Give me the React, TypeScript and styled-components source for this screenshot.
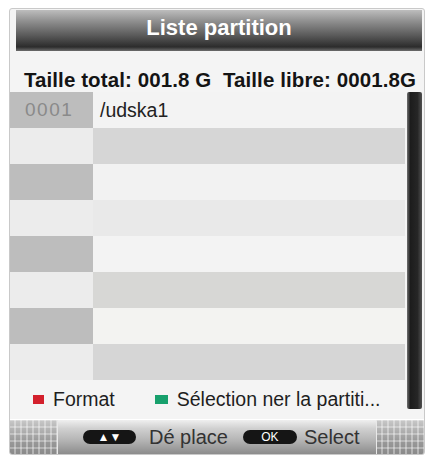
import React from "react";
import styled, { createGlobalStyle } from "styled-components";

const GlobalStyle = createGlobalStyle`
  body {
    margin: 0;
    background: #ffffff;
    font-family: "Liberation Sans", Arial, sans-serif;
  }
`;

const Panel = styled.div`
  box-sizing: border-box;
  width: 416px;
  height: 447px;
  margin: 8px 0 0 9px;
  border: 1px solid #c9c9c9;
  border-radius: 3px;
  background: #f4f4f4;
  display: flex;
  flex-direction: column;
  overflow: hidden;
`;

const TitleBar = styled.div`
  height: 42px;
  margin: 1px 2px 0 6px;
  padding-bottom: 6px;
  box-sizing: border-box;
  display: flex;
  align-items: center;
  justify-content: center;
  background: linear-gradient(#bdbdbd 0%, #8e8e8e 28%, #5a5a5a 62%, #2c2c2c 90%, #6c6c6c 100%);
  color: #ffffff;
  font-size: 22px;
  font-weight: bold;
`;

const Info = styled.div`
  margin-top: 17px;
  padding-left: 6px;
  height: 24px;
  line-height: 24px;
  text-align: center;
  white-space: pre;
  font-size: 20.5px;
  letter-spacing: 0.1px;
  font-weight: bold;
  color: #141414;
`;

const Body = styled.div`
  display: grid;
  grid-template-columns: 395px 15px;
  grid-template-rows: 288px 39px;
  column-gap: 2px;
`;

const Table = styled.div`
  display: grid;
  grid-template-columns: 83px 312px;
  grid-auto-rows: 36px;
`;

const IndexCell = styled.div<{ $dark: boolean }>`
  background: ${(p) => (p.$dark ? "#bdbdbd" : "#ececec")};
  display: flex;
  align-items: center;
  padding-left: 15px;
  font-size: 19px;
  letter-spacing: 1.5px;
  color: #8a8a8a;
`;

const NameCell = styled.div<{ $bg: string }>`
  background: ${(p) => p.$bg};
  display: flex;
  align-items: center;
  padding-left: 7px;
  font-size: 19.5px;
  color: #222222;
`;

const ScrollBar = styled.div`
  grid-column: 2;
  grid-row: 1 / 3;
  height: 317px;
  border-radius: 2px;
  background: linear-gradient(to right, #707070, #1c1c1c 22%, #262626 70%, #505050);
`;

const Legend = styled.div`
  grid-column: 1;
  grid-row: 2;
  display: flex;
  align-items: flex-end;
  padding: 0 0 8px 23px;
  font-size: 19.5px;
  white-space: nowrap;
  color: #1e1e1e;
`;

const LegendItem = styled.div`
  display: flex;
  align-items: center;
  gap: 9px;
  margin-right: 40px;
`;

const Swatch = styled.span<{ $color: string; $w: number }>`
  width: ${(p) => p.$w}px;
  height: 9px;
  background: ${(p) => p.$color};
`;

const BottomBar = styled.div`
  height: 34px;
  display: grid;
  grid-template-columns: 47px 1fr 47px;
  border-top: 1px solid #ffffff;
`;

const Cap = styled.div`
  background:
    repeating-linear-gradient(90deg, transparent 0 4px, rgba(255, 255, 255, 0.35) 4px 6px),
    repeating-linear-gradient(0deg, transparent 0 5px, rgba(255, 255, 255, 0.3) 5px 7px),
    linear-gradient(#c8c8c8, #9a9a9a 60%, #8a8a8a);
`;

const Hints = styled.div`
  display: flex;
  align-items: center;
  padding-left: 25px;
  border-left: 1px solid #e8e8e8;
  border-right: 1px solid #e8e8e8;
  background: linear-gradient(#efefef 0%, #d0d0d0 25%, #b4b4b4 60%, #8c8c8c 100%);
  font-size: 20px;
  color: #333333;
`;

const Pill = styled.span<{ $w: number }>`
  width: ${(p) => p.$w}px;
  height: 14px;
  border-radius: 7px;
  background: #151515;
  color: #ffffff;
  display: flex;
  align-items: center;
  justify-content: center;
  font-size: 12px;
  line-height: 1;
`;

const HintText = styled.span<{ $left: number; $right: number }>`
  margin: 0 ${(p) => p.$right}px 0 ${(p) => p.$left}px;
`;

const rows = [
  { dark: true, bg: "#f3f3f3", index: "0001", name: "/udska1" },
  { dark: false, bg: "#d6d6d6" },
  { dark: true, bg: "#f2f2f2" },
  { dark: false, bg: "#e9e9e9" },
  { dark: true, bg: "#f3f3f3" },
  { dark: false, bg: "#d7d7d5" },
  { dark: true, bg: "#f3f3f1" },
  { dark: false, bg: "#d6d6d6" },
];

export default function App() {
  return (
    <>
      <GlobalStyle />
      <Panel>
        <TitleBar>Liste partition</TitleBar>
        <Info>{"Taille total: 001.8 G  Taille libre: 0001.8G"}</Info>
        <Body>
          <Table>
            {rows.map((r, i) => (
              <React.Fragment key={i}>
                <IndexCell $dark={r.dark}>{r.index}</IndexCell>
                <NameCell $bg={r.bg}>{r.name}</NameCell>
              </React.Fragment>
            ))}
          </Table>
          <ScrollBar />
          <Legend>
            <LegendItem>
              <Swatch $color="#d3202c" $w={11} />
              Format
            </LegendItem>
            <LegendItem>
              <Swatch $color="#17a06c" $w={13} />
              Sélection ner la partiti...
            </LegendItem>
          </Legend>
        </Body>
        <BottomBar>
          <Cap />
          <Hints>
            <Pill $w={53}>▲▼</Pill>
            <HintText $left={13} $right={15}>Dé place</HintText>
            <Pill $w={54}>OK</Pill>
            <HintText $left={7} $right={0}>Select</HintText>
          </Hints>
          <Cap />
        </BottomBar>
      </Panel>
    </>
  );
}
